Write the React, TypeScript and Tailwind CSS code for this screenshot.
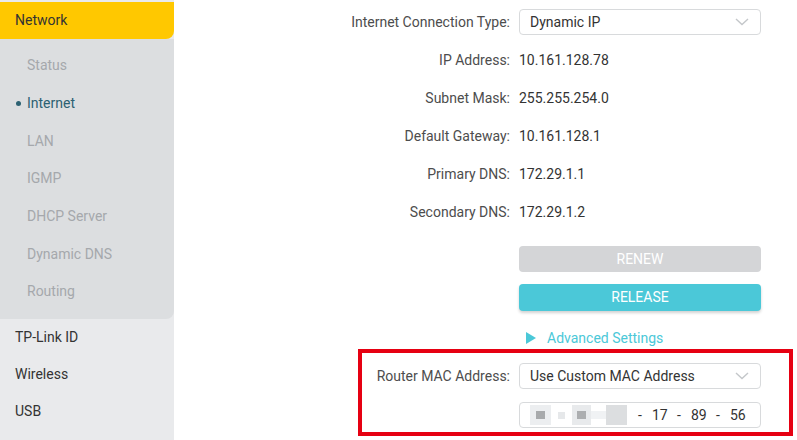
import { Fragment } from "react";

// ─── Sidebar data ─────────────────────────────────────────────────────────────

const SUB_ITEMS = ["Status", "Internet", "LAN", "IGMP", "DHCP Server", "Dynamic DNS", "Routing"];
const TOP_ITEMS = ["TP-Link ID", "Wireless", "USB"];

const INFO_ROWS: [string, string][] = [
  ["IP Address:", "10.161.128.78"],
  ["Subnet Mask:", "255.255.254.0"],
  ["Default Gateway:", "10.161.128.1"],
  ["Primary DNS:", "172.29.1.1"],
  ["Secondary DNS:", "172.29.1.2"],
];

const MAC_TAIL = ["17", "89", "56"];

function Chevron() {
  return (
    <svg width="14" height="8" viewBox="0 0 14 8" fill="none" className="shrink-0">
      <path d="M1 1l6 5.5L13 1" stroke="#c4c7ca" strokeWidth="1.4" />
    </svg>
  );
}

function Select({ value }: { value: string }) {
  return (
    <div className="flex h-[26px] w-[242px] items-center justify-between rounded-[4px] border border-[#d8dadc] bg-white pl-[10px] pr-[11px] text-[#333]">
      <span>{value}</span>
      <Chevron />
    </div>
  );
}

// blurred MAC octets
function Blur() {
  return (
    <div className="flex items-center">
      <div className="flex h-[20px] w-[21px] items-center justify-center bg-[#eceef0]">
        <div className="h-[8px] w-[9px] bg-[#a8aaac]" />
      </div>
      <div className="ml-[7px] h-[7px] w-[7px] bg-[#e6e8ea]" />
      <div className="ml-[7px] flex h-[20px] w-[19px] items-center justify-center bg-[#e8eaec]">
        <div className="h-[8px] w-[9px] bg-[#acaeb0]" />
      </div>
      <div className="h-[8px] w-[15px] bg-[#f0f2f4]" />
      <div className="h-[20px] w-[21px] bg-[#dcdee0]" />
    </div>
  );
}

export default function App() {
  return (
    <div
      className="flex h-[440px] w-[797px] overflow-hidden bg-white text-[14px]"
      style={{ fontFamily: "Roboto, 'Liberation Sans', sans-serif" }}
    >
      {/* ─── Sidebar ─── */}
      <aside className="flex w-[174px] shrink-0 flex-col bg-[#e9eaec] pt-[2px]">
        <div className="flex h-[37px] items-center rounded-br-[8px] bg-[#ffc800] pl-[15px] text-[#333]">
          Network
        </div>
        <div className="flex flex-col rounded-br-[8px] bg-[#dcdee0] pb-[8px] pt-[8px]">
          {SUB_ITEMS.map((item) => (
            <div
              key={item}
              className={[
                "relative flex h-[37.7px] items-center pl-[27px]",
                item === "Internet" ? "text-[#2c6172]" : "text-[#a5a8ac]",
              ].join(" ")}
            >
              {item === "Internet" && (
                <span className="absolute left-[16px] h-[5px] w-[5px] rounded-full bg-[#2c6172]" />
              )}
              {item}
            </div>
          ))}
        </div>
        <div className="flex flex-col">
          {TOP_ITEMS.map((item) => (
            <div key={item} className="flex h-[37px] items-center pl-[15px] text-[#333]">
              {item}
            </div>
          ))}
        </div>
      </aside>

      {/* ─── Main ─── */}
      <main className="flex flex-1 flex-col pt-[3px]">
        <div className="grid grid-cols-[336px_242px] gap-x-[9px]">
          <div className="flex h-[38px] items-center justify-end text-[#4d4d4d]">Internet Connection Type:</div>
          <div className="flex h-[38px] items-center">
            <Select value="Dynamic IP" />
          </div>
          {INFO_ROWS.map(([label, value]) => (
            <Fragment key={label}>
              <div className="flex h-[38px] items-center justify-end pt-[1px] text-[#4d4d4d]">{label}</div>
              <div className="flex h-[38px] items-center pt-[1px] text-[#333]">{value}</div>
            </Fragment>
          ))}
        </div>

        <div className="ml-[345px] flex w-[242px] flex-col">
          <button className="mt-[15px] h-[26px] rounded-[4px] bg-[#d4d5d7] text-white">RENEW</button>
          <button className="mt-[12px] h-[27px] rounded-[4px] bg-[#4bc8d8] text-white shadow-[0_2px_3px_rgba(0,0,0,0.18)]">
            RELEASE
          </button>
          <div className="flex h-[38px] items-center pl-[7px] pt-[16px] text-[#4bc8d8]">
            <svg width="10" height="12" viewBox="0 0 10 12" className="mr-[11px]">
              <path d="M0 0l10 6-10 6z" fill="#4bc8d8" />
            </svg>
            Advanced Settings
          </div>
        </div>

        <div className="ml-[184px] w-[435px] border-4 border-[#e60012] pb-[4px] pt-[10px]">
          <div className="grid grid-cols-[148px_242px] gap-x-[9px] gap-y-[13px]">
            <div className="flex h-[26px] items-center justify-end text-[#4d4d4d]">Router MAC Address:</div>
            <Select value="Use Custom MAC Address" />
            <div />
            <div className="flex h-[26px] items-center rounded-[4px] border border-[#d8dadc] pl-[10px] text-[#333]">
              <Blur />
              <div className="ml-[7px] flex">
                {MAC_TAIL.map((n) => (
                  <Fragment key={n}>
                    <span className="w-[12px] text-center">-</span>
                    <span className="w-[27px] pl-[6px]">{n}</span>
                  </Fragment>
                ))}
              </div>
            </div>
          </div>
        </div>
      </main>
    </div>
  );
}
